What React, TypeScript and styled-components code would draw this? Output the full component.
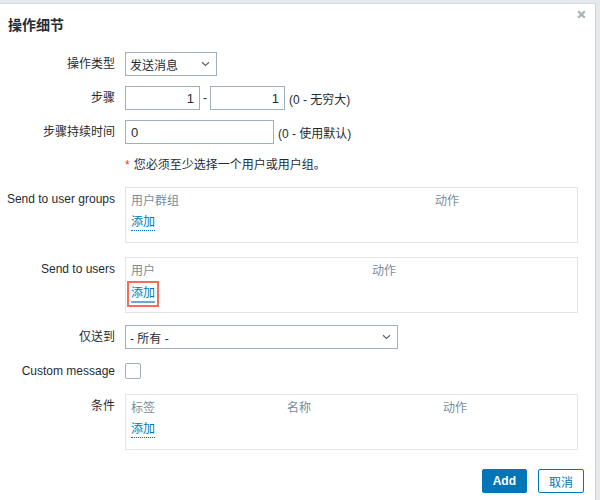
import React from "react";
import styled, { createGlobalStyle } from "styled-components";

const Global = createGlobalStyle`
  html, body { margin: 0; padding: 0; }
  body {
    width: 600px; height: 500px; overflow: hidden;
    background: #e6e9eb;
    font-family: "Liberation Sans", Arial, "Noto Sans CJK SC", sans-serif;
    font-size: 12px; color: #1f2c33;
  }
`;

const Page = styled.div`
  position: relative;
  width: 600px;
  height: 500px;
  overflow: hidden;
  background: #e6e9eb;
`;

const Dialog = styled.div`
  position: absolute;
  top: 3px;
  left: 0;
  width: 596px;
  height: 520px;
  background: #fff;
  border-top: 1px solid #d3d9dd;
  border-right: 1px solid #ccd3d8;
  box-sizing: border-box;
`;

const Header = styled.div`
  display: flex;
  justify-content: space-between;
  align-items: flex-start;
  padding: 10px 9px 0 8px;
  height: 30px;
  box-sizing: border-box;
`;

const Title = styled.h4`
  margin: 0;
  font-size: 14px;
  font-weight: bold;
  color: #1f2c33;
  line-height: 18px;
  margin-top: 2px;
`;

const Close = styled.span`
  display: flex;
  margin-top: -4px;
`;

const Form = styled.div`
  display: flex;
  flex-direction: column;
  padding: 18px 17px 0 0;
`;

const Row = styled.div<{ $gap?: number }>`
  display: grid;
  grid-template-columns: 115px 1fr;
  column-gap: 10px;
  margin-top: ${(p) => p.$gap ?? 0}px;
`;

const Label = styled.div<{ $top?: boolean }>`
  text-align: right;
  align-self: ${(p) => (p.$top ? "start" : "center")};
  padding-top: ${(p) => (p.$top ? "4px" : "0")};
  line-height: 16px;
  white-space: nowrap;
`;

const Field = styled.div`
  display: flex;
  align-items: center;
  gap: 3px;
  min-height: 24px;
`;

const Select = styled.div<{ $w: number }>`
  width: ${(p) => p.$w}px;
  height: 24px;
  box-sizing: border-box;
  border: 1px solid #9eb0ba;
  display: flex;
  align-items: center;
  justify-content: space-between;
  padding: 0 6px 0 4px;
  color: #1f2c33;
`;

const Input = styled.div<{ $w: number; $right?: boolean }>`
  width: ${(p) => p.$w}px;
  height: 24px;
  box-sizing: border-box;
  border: 1px solid #9eb0ba;
  display: flex;
  align-items: center;
  justify-content: ${(p) => (p.$right ? "flex-end" : "flex-start")};
  padding: 0 5px;
  font-size: 13px;
`;

const Hint = styled.span`
  margin-left: 1px;
`;

const Required = styled.div`
  grid-column: 2;
  padding: 3px 0 4px;
  line-height: 16px;
`;

const Star = styled.span`
  color: #e33734;
  margin-right: 4px;
`;

const Box = styled.div<{ $cols: string }>`
  width: 453px;
  height: 56px;
  box-sizing: border-box;
  border: 1px solid #e1e5e8;
  padding: 5px 5px 0 5px;
  display: grid;
  grid-template-columns: ${(p) => p.$cols};
  grid-template-rows: 16px auto;
  row-gap: 5px;
  align-content: start;
`;

const Th = styled.div`
  color: #768d99;
  line-height: 16px;
`;

const AddLink = styled.span<{ $focus?: boolean }>`
  grid-column: 1;
  justify-self: start;
  color: #0275b8;
  line-height: 16px;
  border-bottom: ${(p) => (p.$focus ? "2px solid #69a7d6" : "1px dotted #0275b8")};
  outline: ${(p) => (p.$focus ? "2px solid #f26d5a" : "none")};
  outline-offset: 2px;
  margin-top: ${(p) => (p.$focus ? "1px" : "0")};
`;

const Checkbox = styled.div`
  width: 16px;
  height: 16px;
  box-sizing: border-box;
  border: 1px solid #9eb0ba;
  border-radius: 2px;
`;

const Footer = styled.div`
  display: flex;
  justify-content: flex-end;
  gap: 11px;
  padding: 19px 11px 0 0;
`;

const Button = styled.button<{ $primary?: boolean }>`
  height: 24px;
  box-sizing: border-box;
  padding: 0 10px;
  min-width: 45px;
  border-radius: 2px;
  font-family: inherit;
  font-size: 12px;
  font-weight: ${(p) => (p.$primary ? "bold" : "normal")};
  background: ${(p) => (p.$primary ? "#0275b8" : "#fff")};
  color: ${(p) => (p.$primary ? "#fff" : "#0275b8")};
  border: 1px solid #0275b8;
`;

const Chevron = () => (
  <svg width="9" height="6" viewBox="0 0 9 6">
    <path d="M1 1.2l3.5 3.3 3.5-3.3" fill="none" stroke="#5a6770" strokeWidth="1.2" />
  </svg>
);

const Cross = () => (
  <svg width="9" height="9" viewBox="0 0 9 9">
    <path d="M1.2 1.2l6.6 6.6M7.8 1.2l-6.6 6.6" stroke="#a9b3ba" strokeWidth="2.3" />
  </svg>
);

export default function App() {
  return (
    <Page>
      <Global />
      <Dialog>
        <Header>
          <Title>操作细节</Title>
          <Close>
            <Cross />
          </Close>
        </Header>
        <Form>
          <Row>
            <Label>操作类型</Label>
            <Field>
              <Select $w={92}>
                <span>发送消息</span>
                <Chevron />
              </Select>
            </Field>
          </Row>

          <Row $gap={10}>
            <Label>步骤</Label>
            <Field>
              <Input $w={75} $right>1</Input>
              <span>-</span>
              <Input $w={75} $right>1</Input>
              <Hint>(0 - 无穷大)</Hint>
            </Field>
          </Row>

          <Row $gap={10}>
            <Label>步骤持续时间</Label>
            <Field>
              <Input $w={149}>0</Input>
              <Hint>(0 - 使用默认)</Hint>
            </Field>
          </Row>

          <Row $gap={10}>
            <Required>
              <Star>*</Star>您必须至少选择一个用户或用户组。
            </Required>
          </Row>

          <Row $gap={10}>
            <Label $top>Send to user groups</Label>
            <Box $cols="304px 1fr">
              <Th>用户群组</Th>
              <Th>动作</Th>
              <AddLink>添加</AddLink>
            </Box>
          </Row>

          <Row $gap={14}>
            <Label $top>Send to users</Label>
            <Box $cols="241px 1fr">
              <Th>用户</Th>
              <Th>动作</Th>
              <AddLink $focus>添加</AddLink>
            </Box>
          </Row>

          <Row $gap={12}>
            <Label>仅送到</Label>
            <Field>
              <Select $w={273}>
                <span>- 所有 -</span>
                <Chevron />
              </Select>
            </Field>
          </Row>

          <Row $gap={10}>
            <Label>Custom message</Label>
            <Field>
              <Checkbox />
            </Field>
          </Row>

          <Row $gap={11}>
            <Label $top>条件</Label>
            <Box $cols="156px 156px 1fr">
              <Th>标签</Th>
              <Th>名称</Th>
              <Th>动作</Th>
              <AddLink>添加</AddLink>
            </Box>
          </Row>
        </Form>
        <Footer>
          <Button $primary>Add</Button>
          <Button>取消</Button>
        </Footer>
      </Dialog>
    </Page>
  );
}
